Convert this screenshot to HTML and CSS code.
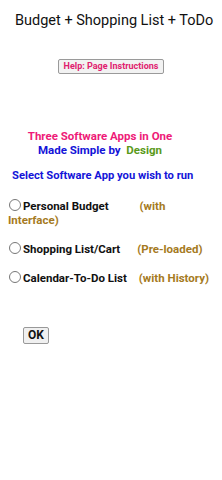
FILE: index.html
```html
<!DOCTYPE html>
<html>
<head>
<meta charset="utf-8">
<link rel="stylesheet" href="styles.css">
</head>
<body>
<h1 class="title">Budget + Shopping List + ToDo</h1>
<div class="help-wrap"><button class="help">Help: Page Instructions</button></div>
<div class="tagline">
  <div class="pink">Three Software Apps in One</div>
  <div class="blue">Made Simple by&nbsp; <span class="green">Design</span></div>
</div>
<div class="select">Select Software App you wish to run</div>
<div class="options">
  <label class="opt"><span class="radio"></span>Personal Budget<span class="note n1">(with Interface)</span></label>
  <label class="opt"><span class="radio"></span>Shopping List/Cart<span class="note n2">(Pre-loaded)</span></label>
  <label class="opt"><span class="radio"></span>Calendar-To-Do List<span class="note n3">(with History)</span></label>
</div>
<div class="ok-wrap"><button class="ok">OK</button></div>
</body>
</html>
```
FILE: styles.css
```css
body {
  margin: 8px;
  font-family: Roboto, "Liberation Sans", sans-serif;
  background: #fff;
}
.title {
  margin: 3px 0 0 0;
  padding-left: 7px;
  font-size: 14.5px;
  font-weight: normal;
  text-align: left;
  white-space: nowrap;
  color: #111;
  line-height: 20px;
}
.help-wrap {
  display: flex;
  justify-content: center;
  margin-top: 28px;
}
.help {
  font-family: Roboto, "Liberation Sans", sans-serif;
  font-weight: bold;
  font-size: 9px;
  color: #e0206e;
  background: #f2f2f2;
  border: 1px solid #9a9a9a;
  border-radius: 2px;
  padding: 1px 5px;
  line-height: 11px;
}
.tagline {
  margin-top: 55px;
  padding-right: 22px;
  text-align: center;
  font-weight: bold;
  font-size: 11.5px;
  line-height: 14px;
}
.pink { color: #ee1a78; }
.blue { color: #1414d8; }
.green { color: #5a9a1a; }
.select {
  margin-top: 12px;
  color: #1414d8;
  font-weight: bold;
  font-size: 11.2px;
  line-height: 14px;
  padding-left: 4px;
  white-space: nowrap;
}
.options {
  margin-top: 16px;
  display: flex;
  flex-direction: column;
  gap: 15px;
}
.opt {
  font-weight: bold;
  font-size: 11.5px;
  line-height: 14px;
  color: #111;
}
.radio {
  display: inline-block;
  box-sizing: border-box;
  width: 12px;
  height: 12px;
  border: 1px solid #777;
  border-radius: 50%;
  margin: 0 2px 0 1px;
  vertical-align: -1px;
  background: #fff;
}
.note { color: #a57a22; }
.n1 { margin-left: 31px; }
.n2 { margin-left: 17px; white-space: nowrap; }
.n3 { margin-left: 12px; white-space: nowrap; }
.ok-wrap {
  margin-top: 42px;
  padding-left: 15px;
  display: flex;
}
.ok {
  font-family: Roboto, "Liberation Sans", sans-serif;
  font-weight: bold;
  font-size: 12px;
  color: #111;
  background: #f0f0f0;
  border: 1px solid #999;
  border-radius: 2px;
  padding: 1px 4px;
  line-height: 13px;
}
```
